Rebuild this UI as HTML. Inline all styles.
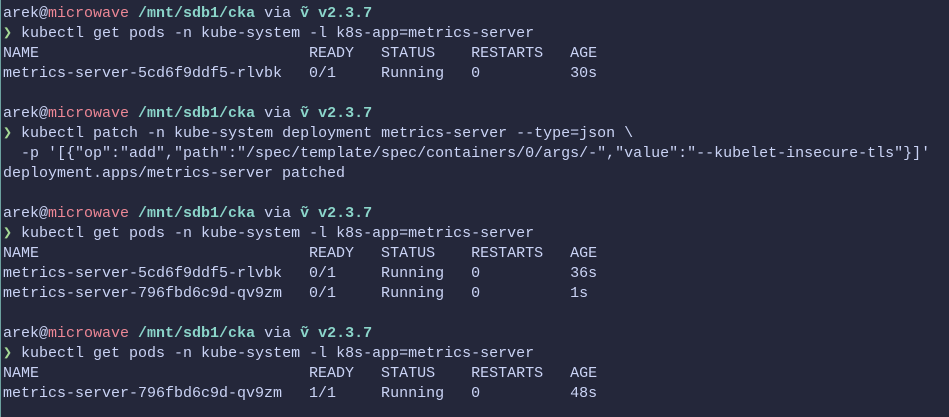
<!DOCTYPE html>
<html><head><meta charset="utf-8"><style>
html,body{margin:0;padding:0;}
body{width:949px;height:417px;background:#24273a;overflow:hidden;position:relative;}
.edge{position:absolute;left:0;top:0;width:1px;height:417px;background:#8bd5ca;opacity:.7}
pre{margin:0;position:absolute;left:3px;top:4px;font-family:"Liberation Mono",monospace;font-size:15px;line-height:20px;color:#cad3f5;white-space:pre;}
.r{color:#ed8796}.t{color:#8bd5ca;font-weight:bold}.g{color:#a6da95;font-weight:bold}
</style></head><body><div class="edge"></div><pre>arek@<span class="r">microwave</span> <span class="t">/mnt/sdb1/cka</span> via <span class="t">ṽ v2.3.7</span>
<span class="g">❯</span> kubectl get pods -n kube-system -l k8s-app=metrics-server
NAME                              READY   STATUS    RESTARTS   AGE
metrics-server-5cd6f9ddf5-rlvbk   0/1     Running   0          30s

arek@<span class="r">microwave</span> <span class="t">/mnt/sdb1/cka</span> via <span class="t">ṽ v2.3.7</span>
<span class="g">❯</span> kubectl patch -n kube-system deployment metrics-server --type=json \
  -p '[{"op":"add","path":"/spec/template/spec/containers/0/args/-","value":"--kubelet-insecure-tls"}]'
deployment.apps/metrics-server patched

arek@<span class="r">microwave</span> <span class="t">/mnt/sdb1/cka</span> via <span class="t">ṽ v2.3.7</span>
<span class="g">❯</span> kubectl get pods -n kube-system -l k8s-app=metrics-server
NAME                              READY   STATUS    RESTARTS   AGE
metrics-server-5cd6f9ddf5-rlvbk   0/1     Running   0          36s
metrics-server-796fbd6c9d-qv9zm   0/1     Running   0          1s

arek@<span class="r">microwave</span> <span class="t">/mnt/sdb1/cka</span> via <span class="t">ṽ v2.3.7</span>
<span class="g">❯</span> kubectl get pods -n kube-system -l k8s-app=metrics-server
NAME                              READY   STATUS    RESTARTS   AGE
metrics-server-796fbd6c9d-qv9zm   1/1     Running   0          48s
</pre></body></html>
